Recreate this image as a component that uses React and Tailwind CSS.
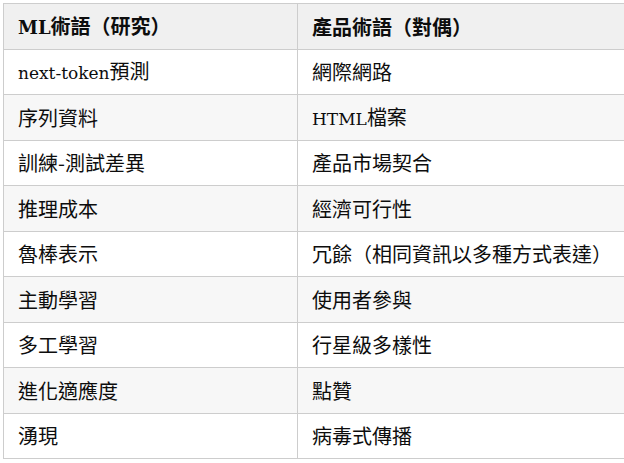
const rows = [
  [<><L>next-token</L>預測</>, '網際網路'],
  ['序列資料', <><L>HTML</L>檔案</>],
  ['訓練-測試差異', '產品市場契合'],
  ['推理成本', '經濟可行性'],
  ['魯棒表示', '冗餘（相同資訊以多種方式表達）'],
  ['主動學習', '使用者參與'],
  ['多工學習', '行星級多樣性'],
  ['進化適應度', '點贊'],
  ['湧現', '病毒式傳播'],
]

function L({ children, bold }) {
  return <span className={bold ? "font-['DejaVu_Serif'] text-[18px]" : "font-['DejaVu_Serif'] text-[17px]"}>{children}</span>
}

export default function App() {
  return (
    <div className="min-h-screen bg-white pl-[3px] pt-[3px] overflow-hidden font-['Noto_Sans_CJK_TC',sans-serif] text-[20px] leading-[20px] text-[#0d0d0d]">
      <table className="w-[660px] border-collapse border border-[#cdcdcd]">
        <thead>
          <tr className="bg-[#f0f0f0]">
            <th className="w-[294px] h-[46px] border border-[#cdcdcd] pl-[14px] p-0 align-middle text-left font-bold">
              <L bold>ML</L>術語（研究）
            </th>
            <th className="h-[46px] border border-[#cdcdcd] pl-[14px] p-0 align-middle text-left font-bold">
              產品術語（對偶）
            </th>
          </tr>
        </thead>
        <tbody>
          {rows.map(([a, b], i) => (
            <tr key={i} className={i % 2 === 1 ? 'h-[46px] bg-[#f7f7f7]' : 'h-[45px] bg-white'}>
              <td className="border border-[#cdcdcd] pl-[14px] py-0 align-middle">{a}</td>
              <td className="border border-[#cdcdcd] pl-[14px] py-0 align-middle">{b}</td>
            </tr>
          ))}
        </tbody>
      </table>
    </div>
  )
}
